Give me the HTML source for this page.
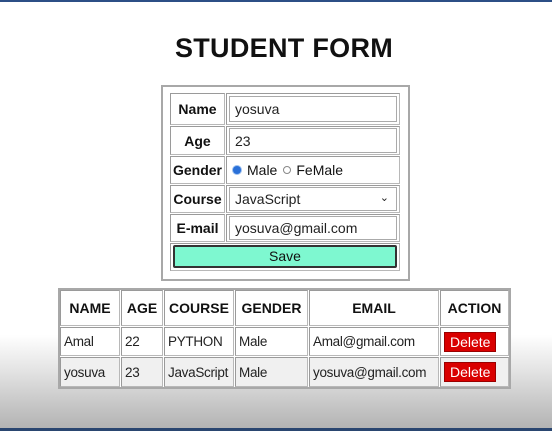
<!DOCTYPE html>
<html><head><style>
*{margin:0;padding:0;box-sizing:border-box}
body{width:552px;height:431px;overflow:hidden;position:relative;font-family:"Liberation Sans",sans-serif;color:#111;
background:linear-gradient(to bottom,#fff 0,#fff 335px,#e4e4e4 370px,#c2c2c2 410px,#b4b4b4 428px);}
.a{position:absolute}
.top{left:0;top:0;width:552px;height:2px;background:#2c4f86}
.bot{left:0;top:428px;width:552px;height:3px;background:#2a4670}
h1{position:absolute;left:8px;width:552px;top:33px;text-align:center;font-size:27px;font-weight:bold;letter-spacing:0.3px}
.box{border:2px solid #a8a8a8}
.c{position:absolute;border:1px solid #b8b8b8;border-top-color:#9a9a9a;border-left-color:#9a9a9a;background:#fff;font-size:14px;display:flex;align-items:center;white-space:nowrap;overflow:hidden}
.l{justify-content:center;font-weight:bold}
.in{position:absolute;border:1px solid #aaa;background:#fff;font-size:14px;display:flex;align-items:center;padding-left:5px;color:#222}
.th{font-weight:bold;justify-content:center;font-size:14px}
.td{padding-left:3px;font-size:13.5px;color:#222;letter-spacing:-0.3px}
.del{background:#d90000;color:#fff;font-size:14px;padding:1px 5px;border:1px solid #900;letter-spacing:0}
</style></head><body>
<div class="a top"></div>
<h1>STUDENT FORM</h1>
<div class="a box" style="left:161px;top:85px;width:249px;height:196px;background:#fff"></div>
<div class="c l" style="left:170px;top:93px;width:55px;height:32px">Name</div>
<div class="c" style="left:226px;top:93px;width:174px;height:32px"></div>
<div class="in" style="left:229px;top:96px;width:168px;height:26px">yosuva</div>
<div class="c l" style="left:170px;top:126px;width:55px;height:29px">Age</div>
<div class="c" style="left:226px;top:126px;width:174px;height:29px"></div>
<div class="in" style="left:229px;top:128px;width:168px;height:25px">23</div>
<div class="c l" style="left:170px;top:156px;width:55px;height:28px">Gender</div>
<div class="c" style="left:226px;top:156px;width:174px;height:28px;padding-left:6px">
<span style="display:inline-block;width:8px;height:8px;border-radius:50%;background:#2a70d8;box-shadow:0 0 0 1px #9cc0f0;margin-right:6px"></span>Male
<span style="display:inline-block;width:8px;height:8px;border-radius:50%;border:1px solid #888;margin:0 5px 0 6px"></span>FeMale</div>
<div class="c l" style="left:170px;top:185px;width:55px;height:28px">Course</div>
<div class="c" style="left:226px;top:185px;width:174px;height:28px"></div>
<div class="in" style="left:229px;top:187px;width:168px;height:24px">JavaScript<span style="position:absolute;right:7px;top:3px;font-size:11px">&#8964;</span></div>
<div class="c l" style="left:170px;top:214px;width:55px;height:28px">E-mail</div>
<div class="c" style="left:226px;top:214px;width:174px;height:28px"></div>
<div class="in" style="left:229px;top:216px;width:168px;height:24px">yosuva@gmail.com</div>
<div class="c" style="left:170px;top:243px;width:230px;height:28px"></div>
<div class="a" style="left:173px;top:245px;width:224px;height:23px;background:#7ef8d0;border:2px solid #333;border-radius:2px;text-align:center;font-size:14px;line-height:19px">Save</div>

<div class="a box" style="left:58px;top:288px;width:453px;height:101px;background:#fff"></div>
<div class="c th" style="left:60px;top:290px;width:60px;height:36px">NAME</div>
<div class="c th" style="left:121px;top:290px;width:42px;height:36px">AGE</div>
<div class="c th" style="left:164px;top:290px;width:70px;height:36px">COURSE</div>
<div class="c th" style="left:235px;top:290px;width:73px;height:36px">GENDER</div>
<div class="c th" style="left:309px;top:290px;width:130px;height:36px">EMAIL</div>
<div class="c th" style="left:440px;top:290px;width:69px;height:36px">ACTION</div>
<div class="c td" style="left:60px;top:327px;width:60px;height:29px">Amal</div>
<div class="c td" style="left:121px;top:327px;width:42px;height:29px">22</div>
<div class="c td" style="left:164px;top:327px;width:70px;height:29px">PYTHON</div>
<div class="c td" style="left:235px;top:327px;width:73px;height:29px">Male</div>
<div class="c td" style="left:309px;top:327px;width:130px;height:29px">Amal@gmail.com</div>
<div class="c td" style="left:440px;top:327px;width:69px;height:29px"><span class="del">Delete</span></div>
<div class="c td" style="left:60px;top:357px;width:60px;height:30px;background:#f0f0f0">yosuva</div>
<div class="c td" style="left:121px;top:357px;width:42px;height:30px;background:#f0f0f0">23</div>
<div class="c td" style="left:164px;top:357px;width:70px;height:30px;background:#f0f0f0">JavaScript</div>
<div class="c td" style="left:235px;top:357px;width:73px;height:30px;background:#f0f0f0">Male</div>
<div class="c td" style="left:309px;top:357px;width:130px;height:30px;background:#f0f0f0">yosuva@gmail.com</div>
<div class="c td" style="left:440px;top:357px;width:69px;height:30px;background:#f0f0f0"><span class="del">Delete</span></div>
<div class="a bot"></div>
</body></html>
